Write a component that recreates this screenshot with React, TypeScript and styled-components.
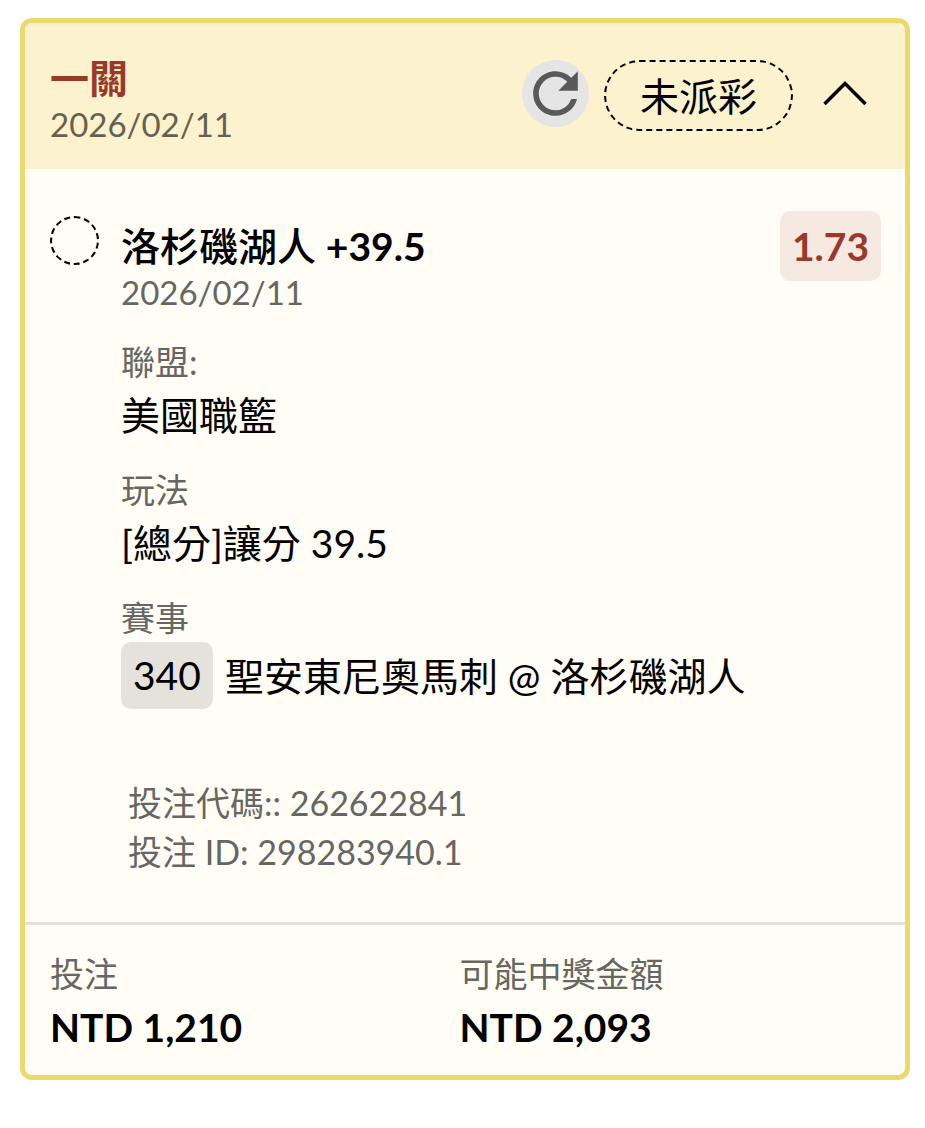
import React from "react";
import styled, { createGlobalStyle } from "styled-components";
import { MdRefresh } from "react-icons/md";

const Global = createGlobalStyle`
  * { box-sizing: border-box; }
  body { margin: 0; background: #fff; color: #000; font-family: Lato, "Noto Sans CJK TC", sans-serif; }
  p, h1, h2, dl, dt, dd { margin: 0; }
`;

const Page = styled.main`
  padding: 18px 15px 48px 20px;
`;

const Card = styled.article`
  border: 5px solid #ecd96c;
  border-radius: 12px;
  background: #fffdf6;
  overflow: hidden;
`;

const Header = styled.header`
  display: flex;
  align-items: flex-start;
  justify-content: space-between;
  padding: 31px 36px 24px 25px;
  background: #fcf2cd;
`;

const Title = styled.h1`
  padding-bottom: 1px;
  font-size: 39px;
  line-height: 48px;
  font-weight: 700;
  color: #983a28;
`;

const DateText = styled.p<{ $onTint?: boolean }>`
  font-size: 33px;
  line-height: 42px;
  color: ${(p) => (p.$onTint ? "#656152" : "#666662")};
`;

const Actions = styled.div`
  display: flex;
  align-items: flex-start;
  gap: 15px;
  padding-top: 6px;
`;

const IconButton = styled.button<{ $filled?: boolean }>`
  display: grid;
  place-items: center;
  width: 67px;
  height: 67px;
  padding: 0;
  border: 0;
  border-radius: 50%;
  color: #595959;
  background: ${(p) => (p.$filled ? "#e5e5e5" : "transparent")};
`;

const ToggleButton = styled(IconButton)`
  width: 48px;
  margin-left: 13px;
  color: #000;
`;

const Status = styled.span`
  padding: 2px 34px 0;
  border: 2px dashed #000;
  border-radius: 36px;
  font-size: 39px;
  line-height: 65px;
`;

const Selection = styled.section`
  display: grid;
  grid-template-columns: 49px 1fr;
  gap: 22px;
  padding: 42px 24px 46px 25px;
`;

const PendingMark = styled.span`
  width: 49px;
  height: 49px;
  margin-top: 5px;
  border: 2px dashed #000;
  border-radius: 50%;
`;

const TopRow = styled.div`
  display: flex;
  align-items: flex-start;
  justify-content: space-between;
`;

const PickName = styled.h2`
  padding-top: 10px;
  font-size: 39px;
  line-height: 50px;
  font-weight: 500;
`;

const Handicap = styled.span`
  font-weight: 700;
`;

const Odds = styled.strong`
  padding: 0 12px;
  border-radius: 10px;
  background: #f5e9e1;
  color: #9c3829;
  font-size: 39px;
  line-height: 70px;
`;

const Details = styled.dl`
  padding-top: 25px;
`;

const Field = styled.div`
  padding-bottom: 22px;
`;

const Label = styled.dt`
  font-size: 34px;
  line-height: 48px;
  color: #666662;
`;

const Value = styled.dd<{ $strong?: boolean }>`
  display: flex;
  align-items: center;
  gap: 12px;
  font-size: 39px;
  line-height: 58px;
  font-weight: ${(p) => (p.$strong ? 700 : 400)};
`;

const EventNumber = styled.span`
  padding: 0 12px;
  border-radius: 10px;
  background: #e5e2dc;
  line-height: 67px;
`;

const Codes = styled.div`
  padding: 47px 7px 0;
  font-size: 34px;
  line-height: 49px;
  color: #666662;
`;

const Totals = styled.dl`
  display: grid;
  grid-template-columns: 1fr 1fr;
  padding: 25px 36px 19px 25px;
  border-top: 3px solid #e5e2dc;
`;

export default function App() {
  return (
    <Page>
      <Global />
      <Card>
        <Header>
          <div>
            <Title>一關</Title>
            <DateText $onTint>2026/02/11</DateText>
          </div>
          <Actions>
            <IconButton $filled aria-label="重新整理">
              <MdRefresh size={67} />
            </IconButton>
            <Status>未派彩</Status>
            <ToggleButton aria-label="收合" aria-expanded="true">
              <svg width="48" height="32" viewBox="0 0 48 32" fill="none">
                <path d="M3.500 26 24 5.500l20.500 20.500" stroke="currentColor" strokeWidth="3.500" />
              </svg>
            </ToggleButton>
          </Actions>
        </Header>
        <Selection>
          <PendingMark />
          <div>
            <TopRow>
              <div>
                <PickName>
                  洛杉磯湖人 <Handicap>+39.5</Handicap>
                </PickName>
                <DateText>2026/02/11</DateText>
              </div>
              <Odds>1.73</Odds>
            </TopRow>
            <Details>
              <Field>
                <Label>聯盟:</Label>
                <Value>美國職籃</Value>
              </Field>
              <Field>
                <Label>玩法</Label>
                <Value>[總分]讓分 39.5</Value>
              </Field>
              <Field>
                <Label>賽事</Label>
                <Value>
                  <EventNumber>340</EventNumber>
                  <span>聖安東尼奧馬刺 @ 洛杉磯湖人</span>
                </Value>
              </Field>
            </Details>
            <Codes>
              <p>投注代碼:: 262622841</p>
              <p>投注 ID: 298283940.1</p>
            </Codes>
          </div>
        </Selection>
        <Totals>
          <div>
            <Label>投注</Label>
            <Value $strong>NTD 1,210</Value>
          </div>
          <div>
            <Label>可能中獎金額</Label>
            <Value $strong>NTD 2,093</Value>
          </div>
        </Totals>
      </Card>
    </Page>
  );
}
